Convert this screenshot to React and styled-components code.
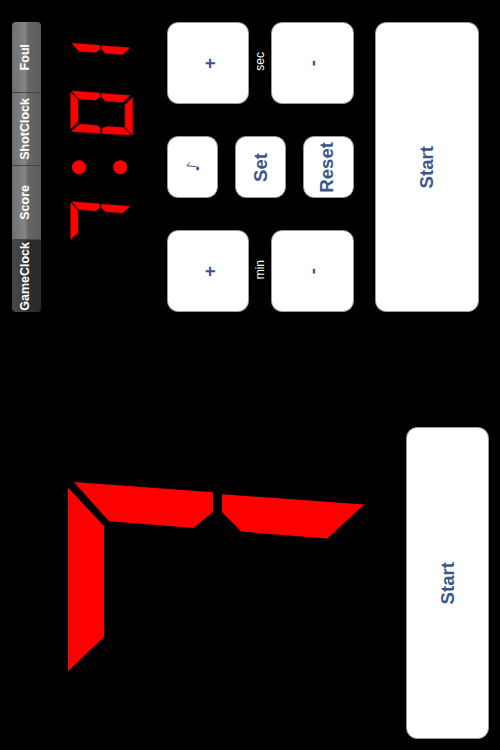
import React from 'react';
import styled, { createGlobalStyle } from 'styled-components';

const GlobalStyle = createGlobalStyle`
  html, body {
    margin: 0;
    padding: 0;
    background: #000;
  }
`;

const Screen = styled.div`
  width: 500px;
  height: 750px;
  overflow: hidden;
  background: #000;
  font-family: "Liberation Sans", Arial, sans-serif;
`;

const TopPanel = styled.section`
  display: flex;
  align-items: flex-start;
  height: 290px;
  padding: 22px 0 0 12px;
`;

const BottomPanel = styled.section`
  display: flex;
  align-items: flex-start;
  margin-top: 115px;
  padding-left: 68px;
`;

const Segments = styled.nav`
  display: flex;
  flex-direction: column;
  width: 29px;
  height: 290px;
  border-radius: 4px;
  overflow: hidden;
`;

const Segment = styled.button`
  display: flex;
  align-items: center;
  justify-content: center;
  height: ${(p) => p.$size}px;
  padding: 0 3px 0 0;
  border: 0;
  border-bottom: ${(p) => (p.$last ? 0 : '1px solid #444')};
  box-sizing: border-box;
  color: #fff;
  font: bold 12.5px "Liberation Sans", Arial, sans-serif;
  background: ${(p) =>
    p.$active
      ? 'linear-gradient(to right, #484848 0%, #3c3c3c 45%, #2c2c2c 55%, #2a2a2a 100%)'
      : 'linear-gradient(to right, #6e6e6e 0%, #868686 45%, #666 55%, #5c5c5c 100%)'};
`;

const SideText = styled.span`
  writing-mode: vertical-rl;
  transform: rotate(180deg);
  white-space: nowrap;
`;

const Clock = styled.svg`
  flex: none;
  width: 66px;
  height: 200px;
  margin: 21px 0 0 29px;
`;

const BigDigit = styled.svg`
  flex: none;
  width: 297px;
  height: 190px;
  margin-top: 55px;
`;

const Controls = styled.div`
  display: flex;
  flex-direction: column;
  justify-content: space-between;
  flex: none;
  width: 187px;
  height: 290px;
  margin-left: 31px;
`;

const StepRow = styled.div`
  display: flex;
  align-items: center;
  justify-content: space-between;
`;

const UnitLabel = styled.span`
  color: #fff;
  font-size: 12px;
`;

const SetRow = styled.div`
  display: flex;
  justify-content: space-between;
`;

const KeyButton = styled.button`
  display: flex;
  align-items: center;
  justify-content: center;
  flex: none;
  width: ${(p) => p.$w}px;
  height: ${(p) => p.$h}px;
  padding: 0 ${(p) => p.$right || 0}px 0 ${(p) => p.$left || 0}px;
  border: 1px solid #999;
  border-radius: 11px;
  box-sizing: border-box;
  background: #fff;
  color: #3a5688;
  font: bold 18.6px "Liberation Sans", Arial, sans-serif;
`;

const StartButton = styled(KeyButton)`
  margin-left: ${(p) => p.$gap}px;
`;

const NoteIcon = styled.svg`
  width: 14px;
  height: 14px;
`;

const Seg = styled.polygon`
  fill: #f00;
  stroke: #f00;
  stroke-width: ${(p) => p.$stroke}px;
`;

const Dot = styled.circle`
  fill: #f00;
`;

// one digit, drawn lying on its side like the rest of the page
const SEGMENTS = {
  a: '0,5.6 36,44 36,155 0,189.3',
  f: '6,0 145,10.3 145,30 125.7,46 41,39.3',
  e: '154,12.3 296.3,22.6 259.3,56.6 173.3,49.6 154,30',
  d: '310,32 310,220 272,182 272,70',
  b: '3,203 47,165 133,173 147,185 147,210',
  c: '158,213 158,187 180,177 263,182 300,220',
};

function Digit({ on, x = 0, y = 0, scale = 1, stroke = 0 }) {
  return (
    <g transform={`translate(${x} ${y}) scale(${scale})`}>
      {on.map((name) => (
        <Seg key={name} points={SEGMENTS[name]} $stroke={stroke} />
      ))}
    </g>
  );
}

function App() {
  return (
    <Screen>
      <GlobalStyle />
      <TopPanel>
        <Segments>
          <Segment $size={71}>
            <SideText>Foul</SideText>
          </Segment>
          <Segment $size={73}>
            <SideText>ShotClock</SideText>
          </Segment>
          <Segment $size={74}>
            <SideText>Score</SideText>
          </Segment>
          <Segment $size={72} $active $last>
            <SideText>GameClock</SideText>
          </Segment>
        </Segments>

        <Clock viewBox="0 0 66 200">
          <Digit on={['f', 'e']} x={0.7} y={0.3} scale={0.2} stroke={2} />
          <Digit on={['a', 'f', 'e', 'd', 'b', 'c']} x={0.7} y={48} scale={0.2} stroke={2} />
          <Dot cx="9" cy="124.3" r="7" />
          <Dot cx="50.3" cy="124.3" r="7" />
          <Digit on={['a', 'f', 'e']} x={0.7} y={158.7} scale={0.2} stroke={2} />
        </Clock>

        <Controls>
          <StepRow>
            <KeyButton $w={82} $h={82} $left={3}>
              <SideText>+</SideText>
            </KeyButton>
            <UnitLabel>
              <SideText>sec</SideText>
            </UnitLabel>
            <KeyButton $w={83} $h={82}>
              <SideText>-</SideText>
            </KeyButton>
          </StepRow>
          <SetRow>
            <KeyButton $w={51} $h={62}>
              <NoteIcon viewBox="0 0 14 14">
                <path d="M3.8 2.3 L0.8 5.7 L10.5 6.8" fill="none" stroke="#3a5688" strokeWidth="1" />
                <ellipse cx="11.7" cy="8.5" rx="1.5" ry="2" fill="#3a5688" />
              </NoteIcon>
            </KeyButton>
            <KeyButton $w={51} $h={62}>
              <SideText>Set</SideText>
            </KeyButton>
            <KeyButton $w={51} $h={62} $right={3}>
              <SideText>Reset</SideText>
            </KeyButton>
          </SetRow>
          <StepRow>
            <KeyButton $w={82} $h={82} $left={3}>
              <SideText>+</SideText>
            </KeyButton>
            <UnitLabel>
              <SideText>min</SideText>
            </UnitLabel>
            <KeyButton $w={83} $h={82}>
              <SideText>-</SideText>
            </KeyButton>
          </StepRow>
        </Controls>

        <StartButton $w={104} $h={290} $gap={21}>
          <SideText>Start</SideText>
        </StartButton>
      </TopPanel>

      <BottomPanel>
        <BigDigit viewBox="0 0 297 190">
          <Digit on={['a', 'f', 'e']} />
        </BigDigit>
        <StartButton $w={83} $h={312} $gap={41}>
          <SideText>Start</SideText>
        </StartButton>
      </BottomPanel>
    </Screen>
  );
}

export default App;
